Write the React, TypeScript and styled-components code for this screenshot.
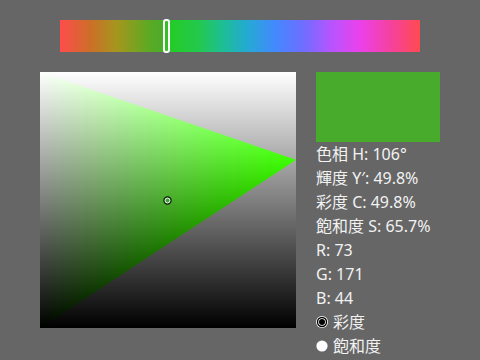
import styled, {createGlobalStyle} from 'styled-components';

const GlobalStyle = createGlobalStyle`
  html, body {
    margin: 0;
    padding: 0;
    background: #666666;
  }
  body {
    font-family: 'Noto Sans', 'Noto Sans CJK JP', sans-serif;
    color: #f2f2f2;
  }
`;

// current colour: hue 106, luma 0.498, chroma 0.498
const HUE_APEX = [0.2333, 1, 0];
const APEX_LUMA = 0.299 * HUE_APEX[0] + 0.587 * HUE_APEX[1] + 0.114 * HUE_APEX[2];
const DIR = HUE_APEX.map((v) => v - APEX_LUMA);
const SIZE = 256;

const Page = styled.div`
  width: 480px;
  height: 360px;
  overflow: hidden;
  padding-top: 20px;
  box-sizing: border-box;
`;

const HueTrack = styled.div`
  position: relative;
  margin-left: 60px;
  width: 360px;
  height: 32px;
  background: linear-gradient(
    to right,
    #ff4c4c 0%,
    #cd6e28 8.3%,
    #a5961e 15.8%,
    #5aaa23 25%,
    #4bac2c 28.6%,
    #24cc24 30.4%,
    #23c850 38.9%,
    #1ebe96 45.3%,
    #23aad2 51.9%,
    #4488ff 60%,
    #6e6eff 67.5%,
    #b455ff 75%,
    #eb41eb 83.3%,
    #f541a0 91.7%,
    #ff4b50 100%
  );
`;

const HueThumb = styled.div`
  position: absolute;
  top: -1px;
  left: 103px;
  width: 3px;
  height: 30px;
  border: 2px solid #ffffff;
  border-radius: 3px;
`;

const Main = styled.div`
  display: flex;
  gap: 20px;
  margin: 20px 0 0 40px;
`;

const Plane = styled.svg`
  display: block;
  width: 256px;
  height: 256px;
  flex: none;
`;

const Side = styled.div`
  display: flex;
  flex-direction: column;
  width: 150px;
`;

const Swatch = styled.div<{$color: string}>`
  width: 124px;
  height: 70px;
  background: ${(p) => p.$color};
`;

const InfoLine = styled.div`
  font-size: 16px;
  line-height: 24px;
  height: 24px;
  white-space: nowrap;
`;

const RadioRow = styled.label`
  display: flex;
  align-items: center;
  gap: 5px;
  font-size: 16px;
  line-height: 24px;
  height: 24px;
`;

const RadioIcon = styled.svg`
  display: block;
  width: 12px;
  height: 12px;
  flex: none;
`;

function toRgb(y: number, c: number) {
  const ch = DIR.map((d) => {
    const v = Math.min(1, Math.max(0, y + c * d));
    return Math.round(v * 255);
  });
  return `rgb(${ch[0]},${ch[1]},${ch[2]})`;
}

function topEdge(x: number) {
  return (1 - APEX_LUMA) * x;
}

function bottomEdge(x: number) {
  return SIZE - APEX_LUMA * x;
}

function LumaChromaPlane() {
  const step = 4;
  const cols = [];
  for (let x0 = 0; x0 < SIZE; x0 += step) {
    const x1 = x0 + step;
    const xc = x0 + step / 2;
    const c = xc / SIZE;
    const yt = topEdge(xc);
    const yb = bottomEdge(xc);
    cols.push({x0, x1, c, yt, yb, id: `col${x0}`});
  }

  return (
    <Plane viewBox="0 0 256 256">
      <defs>
        <linearGradient id="gray" x1="0" y1="0" x2="0" y2="1">
          <stop offset="0" stopColor="#ffffff" />
          <stop offset="1" stopColor="#000000" />
        </linearGradient>
        {cols.map((col) => (
          <linearGradient
            key={col.id}
            id={col.id}
            gradientUnits="userSpaceOnUse"
            x1="0"
            y1={col.yt}
            x2="0"
            y2={col.yb}
          >
            <stop offset="0" stopColor={toRgb(1 - col.yt / SIZE, col.c)} />
            <stop offset="1" stopColor={toRgb(1 - col.yb / SIZE, col.c)} />
          </linearGradient>
        ))}
      </defs>
      <rect x="0" y="0" width="256" height="256" fill="url(#gray)" />
      {cols.map((col) => (
        <polygon
          key={col.id}
          fill={`url(#${col.id})`}
          points={`${col.x0},${topEdge(col.x0)} ${col.x1 + 0.5},${topEdge(col.x1 + 0.5)} ${col.x1 + 0.5},${bottomEdge(col.x1 + 0.5)} ${col.x0},${bottomEdge(col.x0)}`}
        />
      ))}
      <circle cx="127.5" cy="128.5" r="3.6" fill="none" stroke="#111" strokeWidth="1.2" />
      <circle cx="127.5" cy="128.5" r="2.4" fill="#3fa33a" stroke="#e6f2e0" strokeWidth="1" />
    </Plane>
  );
}

function Radio({checked}: {checked: boolean}) {
  return (
    <RadioIcon viewBox="0 0 12 12">
      {checked ? (
        <>
          <circle cx="6" cy="6" r="6" fill="#ffffff" />
          <circle cx="6" cy="6" r="5.2" fill="#000000" />
          <circle cx="6" cy="6" r="3.8" fill="#ffffff" />
          <circle cx="6" cy="6" r="3" fill="#000000" />
        </>
      ) : (
        <circle cx="6" cy="6" r="5.6" fill="#ffffff" />
      )}
    </RadioIcon>
  );
}

function App() {
  const rgb = [73, 171, 44];
  const lines = [
    '色相 H: 106°',
    '輝度 Y′: 49.8%',
    '彩度 C: 49.8%',
    '飽和度 S: 65.7%',
    `R: ${rgb[0]}`,
    `G: ${rgb[1]}`,
    `B: ${rgb[2]}`,
  ];

  return (
    <Page>
      <GlobalStyle />
      <HueTrack>
        <HueThumb />
      </HueTrack>
      <Main>
        <LumaChromaPlane />
        <Side>
          <Swatch $color={`rgb(${rgb.join(',')})`} />
          {lines.map((line) => (
            <InfoLine key={line}>{line}</InfoLine>
          ))}
          <RadioRow>
            <Radio checked />
            彩度
          </RadioRow>
          <RadioRow>
            <Radio checked={false} />
            飽和度
          </RadioRow>
        </Side>
      </Main>
    </Page>
  );
}

export default App;
